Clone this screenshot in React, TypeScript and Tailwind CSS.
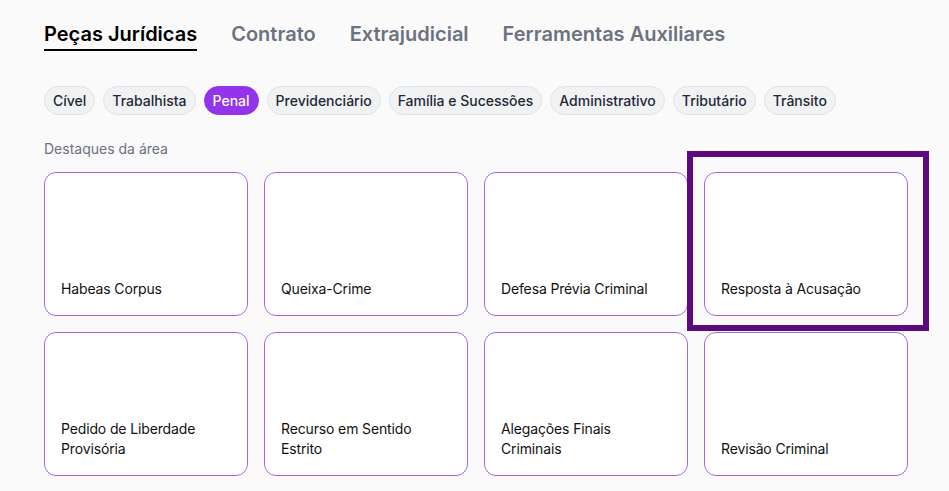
import React from "react";

const tabs = ["Peças Jurídicas", "Contrato", "Extrajudicial", "Ferramentas Auxiliares"];
const areas = [
  "Cível",
  "Trabalhista",
  "Penal",
  "Previdenciário",
  "Família e Sucessões",
  "Administrativo",
  "Tributário",
  "Trânsito",
];
const cards = [
  ["Habeas Corpus"],
  ["Queixa-Crime"],
  ["Defesa Prévia Criminal"],
  ["Resposta à Acusação"],
  ["Pedido de Liberdade", "Provisória"],
  ["Recurso em Sentido", "Estrito"],
  ["Alegações Finais", "Criminais"],
  ["Revisão Criminal"],
];

export default function App() {
  return (
    <div
      className="relative min-h-[491px] w-[949px] overflow-hidden bg-[#fafafa] pl-[44px]"
      style={{ fontFamily: "Inter, 'Noto Sans', sans-serif" }}
    >
      <nav className="flex gap-[34px] pt-[21px]">
        {tabs.map((t, i) => (
          <div
            key={t}
            className={
              i === 0
                ? "border-b-2 border-black pb-[2px] text-[20px] font-semibold leading-[26px] text-black"
                : "pb-[2px] text-[20px] font-semibold leading-[26px] text-[#6b7280]"
            }
          >
            {t}
          </div>
        ))}
      </nav>

      <div className="mt-[35px] flex gap-2">
        {areas.map((a) => (
          <span
            key={a}
            className={
              a === "Penal"
                ? "h-[29px] rounded-full border border-[#9333ea] bg-[#9333ea] px-[8px] text-[14px] font-medium leading-[27px] text-white"
                : "h-[29px] rounded-full border border-[#e2e3e7] bg-[#f1f2f4] px-[8px] text-[14px] font-medium leading-[27px] text-[#1f2937]"
            }
          >
            {a}
          </span>
        ))}
      </div>

      <div className="mt-[24px] text-[14px] leading-[20px] text-[#6b7280]">Destaques da área</div>

      <div className="mt-[13px] grid w-[864px] grid-cols-4 gap-x-[16px] gap-y-[16px]">
        {cards.map((lines) => (
          <div
            key={lines.join(" ")}
            className="flex h-[144px] flex-col justify-end rounded-[12px] border border-[#a46ad6] bg-white px-[16px] pb-[16px]"
          >
            {lines.map((l) => (
              <div key={l} className="text-[14px] leading-[20px] tracking-[-0.01em] text-[#111111]">
                {l}
              </div>
            ))}
          </div>
        ))}
      </div>

      <div className="pointer-events-none absolute left-[687px] top-[151px] h-[180px] w-[242px] border-[6px] border-[#5b0b7b]" />
    </div>
  );
}
